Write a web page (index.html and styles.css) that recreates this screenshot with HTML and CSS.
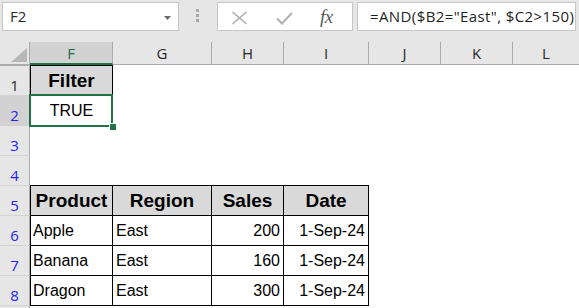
FILE: index.html
```html
<!DOCTYPE html>
<html>
<head>
<meta charset="utf-8">
<link rel="stylesheet" href="styles.css">
</head>
<body>
<div class="app">
  <div class="topbar">
    <div class="namebox">
      <span class="name">F2</span>
      <svg class="caret" width="7" height="4" viewBox="0 0 7 4"><polygon points="0,0 7,0 3.5,4" fill="#6b6b6b"/></svg>
    </div>
    <div class="grip">
      <svg width="3" height="13" viewBox="0 0 3 13"><rect x="0" y="0" width="3" height="3" fill="#a8a8a8"/><rect x="0" y="5" width="3" height="3" fill="#a8a8a8"/><rect x="0" y="10" width="3" height="3" fill="#a8a8a8"/></svg>
    </div>
    <div class="iconbox">
      <svg class="ic-x" width="17" height="14" viewBox="0 0 17 14"><path d="M1.5 1 L15.5 13 M15.5 1 L1.5 13" stroke="#a9a9a9" stroke-width="1.5" fill="none"/></svg>
      <svg class="ic-ok" width="17" height="13" viewBox="0 0 17 13"><path d="M1 6.5 L6 11.5 L16 1" stroke="#b3b3b3" stroke-width="2.2" fill="none"/></svg>
      <span class="fx">fx</span>
    </div>
    <div class="formula">=AND($B2="East", $C2&gt;150)</div>
  </div>

  <div class="sheet">
    <div class="corner"><svg width="16" height="14" viewBox="0 0 16 14"><polygon points="16,0 16,14 0,14" fill="#b8b8b8"/></svg></div>
    <div class="colh sel">F</div>
    <div class="colh">G</div>
    <div class="colh">H</div>
    <div class="colh">I</div>
    <div class="colh">J</div>
    <div class="colh">K</div>
    <div class="colh last">L</div>

    <div class="rowh first">1</div>
    <div class="c fill bl bt br bold center filter">Filter</div>
    <div class="c"></div><div class="c"></div><div class="c"></div><div class="c"></div><div class="c"></div><div class="c"></div>

    <div class="rowh sel">2</div>
    <div class="c bl bt br center val sel-cell">TRUE<span class="selbox"></span><span class="handle"></span></div>
    <div class="c"></div><div class="c"></div><div class="c"></div><div class="c"></div><div class="c"></div><div class="c"></div>

    <div class="rowh">3</div>
    <div class="c bt-only"></div>
    <div class="c"></div><div class="c"></div><div class="c"></div><div class="c"></div><div class="c"></div><div class="c"></div>

    <div class="rowh">4</div>
    <div class="c"></div><div class="c"></div><div class="c"></div><div class="c"></div><div class="c"></div><div class="c"></div><div class="c"></div>

    <div class="rowh">5</div>
    <div class="c fill bl bt br bold center">Product</div>
    <div class="c fill bt br bold center">Region</div>
    <div class="c fill bt br bold center">Sales</div>
    <div class="c fill bt br bold center">Date</div>
    <div class="c"></div><div class="c"></div><div class="c"></div>

    <div class="rowh">6</div>
    <div class="c bl bt br val left fcol">Apple</div>
    <div class="c bt br val left">East</div>
    <div class="c bt br val right">200</div>
    <div class="c bt br val right">1-Sep-24</div>
    <div class="c"></div><div class="c"></div><div class="c"></div>

    <div class="rowh">7</div>
    <div class="c bl bt br val left fcol">Banana</div>
    <div class="c bt br val left">East</div>
    <div class="c bt br val right">160</div>
    <div class="c bt br val right">1-Sep-24</div>
    <div class="c"></div><div class="c"></div><div class="c"></div>

    <div class="rowh">8</div>
    <div class="c bl bt br val left fcol">Dragon</div>
    <div class="c bt br val left">East</div>
    <div class="c bt br val right">300</div>
    <div class="c bt br val right">1-Sep-24</div>
    <div class="c"></div><div class="c"></div><div class="c"></div>

    <div class="rowh"></div>
    <div class="c bt-only"></div>
    <div class="c bt-only"></div>
    <div class="c bt-only"></div>
    <div class="c bt-only"></div>
    <div class="c"></div><div class="c"></div><div class="c"></div>
  </div>
</div>
</body>
</html>
```

FILE: styles.css
```css
* { box-sizing: border-box; }
html, body {
  margin: 0;
  padding: 0;
  width: 579px;
  height: 308px;
  overflow: hidden;
  background: #e6e6e6;
}
.app {
  display: flex;
  flex-direction: column;
  width: 579px;
  height: 308px;
  overflow: hidden;
}
.topbar {
  display: flex;
  align-items: flex-start;
  height: 42px;
  padding-top: 2px;
  flex: none;
}
.namebox {
  width: 177px;
  height: 29px;
  margin-left: 2px;
  background: #fff;
  border: 1px solid #c6c6c6;
  display: flex;
  align-items: center;
  padding: 0 7px 0 7px;
}
.name {
  font-family: "Open Sans", "Noto Sans", sans-serif;
  font-size: 15px;
  line-height: 27px;
  color: #2b2b2b;
  flex: 1;
}
.caret { margin-top: 2px; }
.grip {
  width: 38px;
  height: 29px;
  display: flex;
  justify-content: center;
  padding-top: 7px;
  padding-right: 1px;
}
.iconbox {
  width: 136px;
  height: 29px;
  background: #fff;
  border: 1px solid #c6c6c6;
  display: flex;
  align-items: center;
  padding-left: 13px;
}
.ic-x { margin-top: 3px; }
.ic-ok { margin-left: 28px; margin-top: 3px; }
.fx {
  margin-left: 27px;
  font-family: "Liberation Serif", "DejaVu Serif", serif;
  font-style: italic;
  font-size: 19px;
  color: #5a5a5a;
  line-height: 27px;
  letter-spacing: -0.5px;
}
.formula {
  flex: 1;
  height: 29px;
  margin-left: 4px;
  margin-right: 3px;
  background: #fff;
  border: 1px solid #c6c6c6;
  padding-left: 12px;
  font-family: "Open Sans", "Noto Sans", sans-serif;
  font-size: 15px;
  letter-spacing: 0.4px;
  line-height: 26px;
  color: #1f1f1f;
  white-space: nowrap;
  overflow: hidden;
}

.sheet {
  flex: none;
  display: grid;
  grid-template-columns: 30px 83px 99px 72px 85px 72px 72px 1fr;
  grid-template-rows: 23px repeat(9, 30px);
  background: #fff;
}
.corner {
  background: #e6e6e6;
  border-right: 1px solid #ababab;
  border-bottom: 1px solid #ababab;
  display: flex;
  justify-content: flex-end;
  align-items: flex-end;
  padding: 0 2px 2px 0;
}
.colh {
  background: #e6e6e6;
  border-right: 1px solid #ababab;
  border-bottom: 1px solid #ababab;
  text-align: center;
  font-family: "Open Sans", "Noto Sans", sans-serif;
  font-size: 15px;
  line-height: 22px;
  color: #262626;
}
.colh.last { border-right: none; }
.colh.sel {
  background: #d2d2d2;
  border-bottom: 2px solid #217346;
  color: #1d6b41;
}
.rowh {
  background: #e6e6e6;
  border-right: 1px solid #ababab;
  border-top: 1px solid #d2d2d2;
  text-align: center;
  font-family: "Open Sans", "Noto Sans", sans-serif;
  font-size: 15px;
  line-height: 20px;
  padding-top: 9px;
  color: #2424f0;
}
.rowh.first { color: #262626; border-top-color: #ababab; }
.rowh.sel { background: #d2d2d2; }

.c {
  font-family: "Liberation Sans", Arial, sans-serif;
  color: #000;
  white-space: nowrap;
  overflow: visible;
}
.fill { background: #d9d9d9; }
.bl { border-left: 1px solid #000; }
.bt { border-top: 1px solid #000; }
.br { border-right: 1px solid #000; }
.bt-only { border-top: 1px solid #000; }
.bold {
  font-weight: bold;
  font-size: 19px;
  line-height: 29px;
}
.filter { padding-top: 1px; line-height: 28px; }
.val {
  font-size: 16px;
  line-height: 28px;
  padding-top: 1px;
}
.center { text-align: center; }
.left { text-align: left; padding-left: 3px; }
.left.fcol { padding-left: 2px; }
.right { text-align: right; padding-right: 3px; }

.sel-cell { position: relative; }
.selbox {
  position: absolute;
  left: -2px;
  top: -2px;
  right: -1px;
  bottom: -2px;
  border: 2px solid #217346;
}
.handle {
  position: absolute;
  right: -4px;
  bottom: -5px;
  width: 6px;
  height: 6px;
  background: #217346;
  outline: 1px solid #fff;
}
```
